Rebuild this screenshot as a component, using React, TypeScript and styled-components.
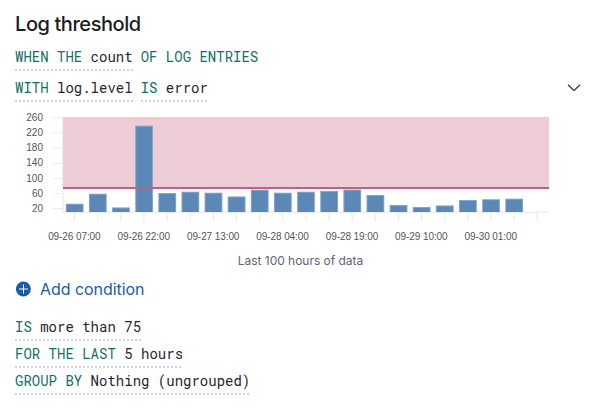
import React from 'react';
import styled, { createGlobalStyle } from 'styled-components';

const Global = createGlobalStyle`
  body { margin: 0; background: #fff; color: #1a1c21; font-family: Inter, sans-serif; }
`;
const Page = styled.main`
  box-sizing: border-box;
  width: 597px;
  height: 411px;
  padding: 10px 15px 0;
  overflow: hidden;
`;
const Title = styled.h3`
  margin: 0;
  height: 28px;
  font-size: 20px;
  line-height: 28px;
  font-weight: 500;
  letter-spacing: -0.43px;
`;
const Row = styled.div<{ $top: number }>`
  display: flex;
  align-items: flex-start;
  gap: 8px;
  margin-top: ${(p) => p.$top}px;
`;
const Expression = styled.button<{ $plain?: boolean }>`
  display: block;
  height: 24px;
  box-sizing: border-box;
  padding: 0 0 4px;
  border: 0;
  background: ${(p) =>
    p.$plain ? 'none' : 'repeating-linear-gradient(90deg, #cdd3e2 0 2px, transparent 2px 4px) 0 100% / 100% 2px no-repeat'};
  font: 14px/20px 'Roboto Mono', 'DejaVu Sans Mono', monospace;
  color: #25262e;
  white-space: pre;
`;
const Keyword = styled.span`
  color: #12705f;
`;
const Toggle = styled.button`
  display: flex;
  margin: 2px 0 0 auto;
  padding: 0;
  border: 0;
  background: none;
`;
const Chart = styled.svg`
  display: block;
  margin: 8px 0 0 -15px;
  font: 10px 'Liberation Sans', Arial, sans-serif;
  fill: #555;
`;
const Caption = styled.div`
  width: 571px;
  height: 18px;
  text-align: center;
  font-size: 12px;
  line-height: 18px;
  letter-spacing: -0.03px;
  color: #5e6472;
`;
const AddButton = styled.button`
  display: flex;
  align-items: center;
  gap: 9px;
  height: 24px;
  margin-top: 7px;
  padding: 0;
  border: 0;
  background: none;
  font: 16px/24px Inter, sans-serif;
  letter-spacing: -0.06px;
  color: #1a5ca8;
`;
const Conditions = styled.div`
  display: flex;
  flex-direction: column;
  align-items: flex-start;
  gap: 3px;
  margin-top: 16px;
`;
const Label = styled.span`
  display: block;
  height: 16px;
  line-height: 16px;
`;

const tops = [204, 194, 207.7, 126, 193.3, 192, 193, 196.7, 190, 193, 192, 191.3, 189.8, 195.3, 205.3, 207.3, 205.7, 200.3, 199.5, 199];
const dates = ['09-26 07:00', '09-26 22:00', '09-27 13:00', '09-28 04:00', '09-28 19:00', '09-29 10:00', '09-30 01:00'];
const levels = [260, 220, 180, 140, 100, 60, 20];
const STEP = 23.13;
const tickX = (i: number) => 74.6 + i * STEP;

function Histogram() {
  return (
    <Chart width="597" height="142" viewBox="0 110 597 142">
      {levels.map((v, i) => (
        <g key={v}>
          <path d={`M53 ${117.9 + i * 15.13}H63`} stroke="#ececec" />
          <text x="43" y={121 + i * 15.13} textAnchor="end">{v}</text>
        </g>
      ))}
      {Array.from({ length: 21 }, (_, i) => (
        <path key={i} d={`M${tickX(i)} 212V221.7`} stroke="#e8e8e8" />
      ))}
      <path d="M63 117V212.2H549" fill="none" stroke="#eee" strokeWidth="1.5" />
      <rect x="63" y="117" width="486" height="71" fill="#eeccd5" />
      {tops.map((top, i) => (
        <g key={i}>
          <rect x={tickX(i) - 8.8} y={top - 0.3} width="17.8" height={212.3 - top} fill="#85a6ca" />
          <rect x={tickX(i) - 7.8} y={top + 0.7} width="15.8" height={211.3 - top} fill="#5b88b6" />
        </g>
      ))}
      <path d="M63 188H549" stroke="#cc5b80" strokeWidth="2" />
      <rect x={tickX(3) - 7.8} y="187" width="15.8" height="2" fill="#5b88b6" opacity="0.3" />
      {dates.map((d, i) => (
        <text key={d} x={tickX(i * 3) - 0.2} y="240" textAnchor="middle" textLength="52.5">{d}</text>
      ))}
    </Chart>
  );
}

function Clause({ keyword, value }: { keyword: string; value?: string }) {
  return (
    <Expression $plain={!value}>
      <Label><Keyword>{keyword}</Keyword>{value && ` ${value}`}</Label>
    </Expression>
  );
}

export default function App() {
  return (
    <Page>
      <Global />
      <Title>Log threshold</Title>
      <Row $top={9}>
        <Clause keyword="WHEN THE" value="count" />
        <Clause keyword="OF LOG ENTRIES" />
      </Row>
      <Row $top={7}>
        <Clause keyword="WITH" value="log.level" />
        <Clause keyword="IS" value="error" />
        <Toggle aria-label="Toggle chart">
          <svg width="16" height="16" viewBox="0 0 16 16" fill="none" stroke="#343741" strokeWidth="1.2">
            <path d="M2 4.7 7.4 10q.6.6 1.2 0L14 4.7" />
          </svg>
        </Toggle>
      </Row>
      <Histogram />
      <Caption>Last 100 hours of data</Caption>
      <AddButton>
        <svg width="16" height="16" viewBox="0 0 16 16">
          <circle cx="8.4" cy="8" r="7.5" fill="#1a5ca8" />
          <path d="M4 8H13M8.5 3.5V12.5" stroke="#fff" />
        </svg>
        Add condition
      </AddButton>
      <Conditions>
        <Clause keyword="IS" value="more than 75" />
        <Clause keyword="FOR THE LAST" value="5 hours" />
        <Clause keyword="GROUP BY" value="Nothing (ungrouped)" />
      </Conditions>
    </Page>
  );
}
